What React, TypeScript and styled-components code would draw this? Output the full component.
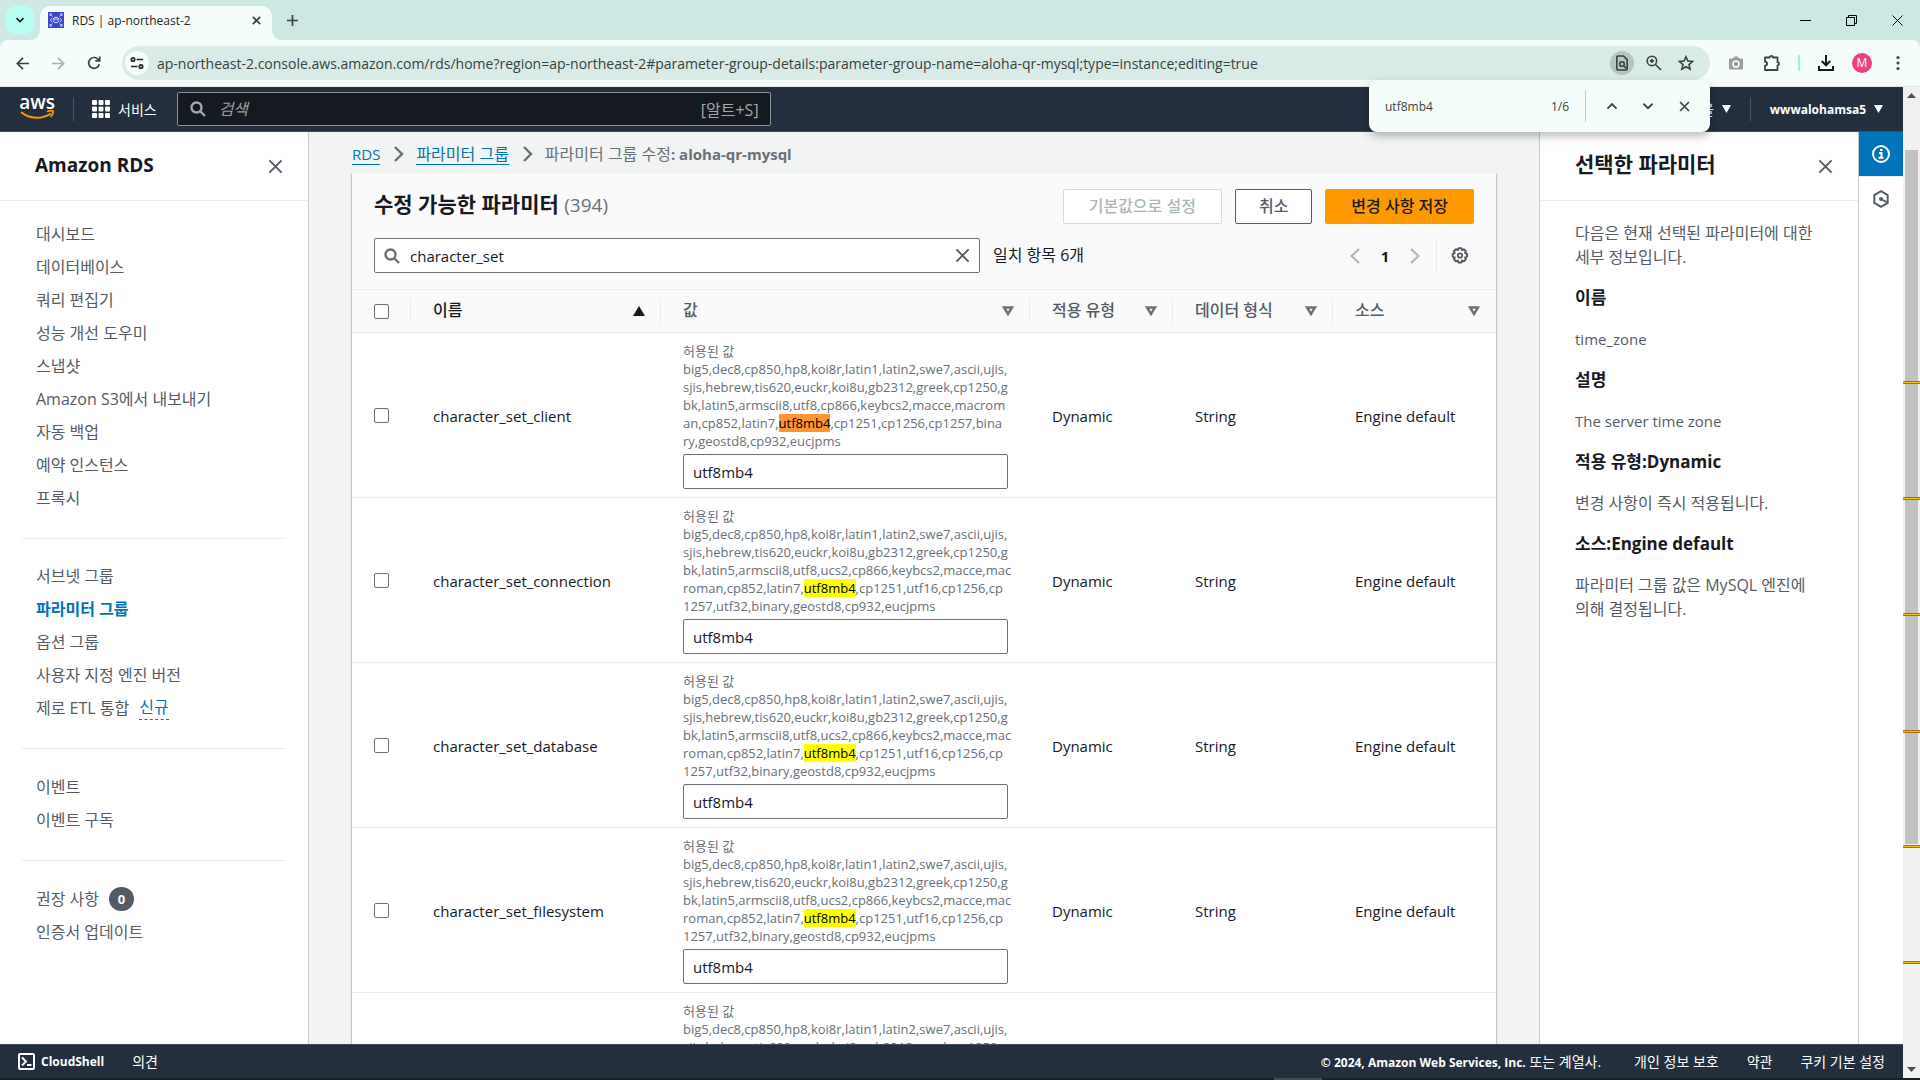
import React from 'react';
import styled, { createGlobalStyle, css } from 'styled-components';

const latin = '"Open Sans", "Noto Sans", "Noto Sans CJK KR", sans-serif';

const color = {
  navy: '#232f3e',
  ink: '#16191f',
  text: '#545b64',
  muted: '#687078',
  blue: '#0073bb',
  line: '#eaeded',
  edge: '#d5dbdb',
  mint: '#cce8e2',
  toolbar: '#f4fdfa',
};

const GlobalStyle = createGlobalStyle`
  *, *::before, *::after { box-sizing: border-box; }
  body { margin: 0; font-family: ${latin}; color: ${color.ink}; }
  button, input { font: inherit; color: inherit; }
  button { border: 0; background: none; padding: 0; cursor: pointer; }
  h1, h2, h3, p, ul, ol { margin: 0; padding: 0; }
  ul, ol { list-style: none; }
  svg { display: block; flex: none; }
`;

const Screen = styled.div`
  height: 100vh;
  display: flex;
  flex-direction: column;
  overflow: hidden;
`;

/* ---------- browser frame ---------- */

const TabStrip = styled.div`
  flex: none;
  height: 40px;
  display: flex;
  background: ${color.mint};
`;

const TabSearch = styled.button`
  width: 28px;
  height: 28px;
  margin: 6px 6px 0 6px;
  border-radius: 10px;
  background: #b4fff0;
  display: grid;
  place-items: center;
`;

const Tab = styled.div`
  position: relative;
  width: 232px;
  height: 34px;
  margin-top: 6px;
  padding: 0 8px;
  display: flex;
  align-items: center;
  gap: 8px;
  border-radius: 10px 10px 0 0;
  background: ${color.toolbar};
  font-size: 12px;
  color: #1f2423;
  padding-bottom: 6px;

  &::before,
  &::after {
    content: '';
    position: absolute;
    bottom: 0;
    width: 10px;
    height: 10px;
  }
  &::before {
    left: -10px;
    background: radial-gradient(circle at 0 0, transparent 10px, ${color.toolbar} 10px);
  }
  &::after {
    right: -10px;
    background: radial-gradient(circle at 100% 0, transparent 10px, ${color.toolbar} 10px);
  }
`;

const TabTitle = styled.span`
  flex: 1;
  white-space: nowrap;
`;

const IconButton = styled.button<{ $size?: number; $color?: string; $bg?: string }>`
  flex: none;
  width: ${(p) => p.$size ?? 24}px;
  height: ${(p) => p.$size ?? 24}px;
  border-radius: 50%;
  color: ${(p) => p.$color ?? '#39423f'};
  background: ${(p) => p.$bg ?? 'transparent'};
  display: grid;
  place-items: center;
`;

const NewTab = styled(IconButton)`
  margin: 8px 0 0 8px;
`;

const WindowControls = styled.div`
  margin-left: auto;
  display: flex;
`;

const WindowButton = styled.button`
  width: 46px;
  height: 40px;
  display: grid;
  place-items: center;
  color: #000;
`;

const ToolbarBack = styled.div`
  flex: none;
  background: ${color.mint};
`;

const Toolbar = styled.div`
  height: 47px;
  padding: 0 10px 0 10px;
  display: flex;
  align-items: center;
  background: ${color.toolbar};
  border-bottom: 1px solid #dfe7e5;
  border-radius: 8px 8px 0 0;
`;

const NavButtons = styled.div`
  display: flex;
  gap: 12px;
  margin-right: 16px;
`;

const AddressBar = styled.label`
  flex: 1;
  height: 34px;
  padding: 0 12px 0 3px;
  display: flex;
  align-items: center;
  gap: 8px;
  border-radius: 17px;
  background: #d9ebe7;
`;

const AddressInput = styled.input`
  flex: 1;
  min-width: 0;
  border: 0;
  padding: 0;
  outline: 0;
  background: none;
  font-size: 14px;
  color: #35413e;
`;

const Extensions = styled.div`
  display: flex;
  align-items: center;
  gap: 12px;
  margin-left: 14px;
`;

const ToolbarRule = styled.span`
  width: 2px;
  height: 16px;
  margin: 0 2px;
  background: #9deee3;
`;

const Avatar = styled.button`
  width: 20px;
  height: 20px;
  margin: 0 2px;
  border-radius: 50%;
  background: #ec407a;
  color: #fff;
  font-size: 12px;
  line-height: 20px;
`;

const FindBar = styled.form`
  position: absolute;
  z-index: 3;
  top: 80px;
  right: 210px;
  width: 341px;
  height: 52px;
  padding: 0 14px 0 16px;
  display: flex;
  align-items: center;
  border-radius: 8px;
  background: ${color.toolbar};
  box-shadow: 0 4px 10px rgba(0, 0, 0, 0.28);
  font-size: 12px;
  color: #3c4442;
`;

const FindInput = styled.input`
  flex: 1;
  min-width: 0;
  padding: 0;
  border: 0;
  outline: 0;
  background: none;
`;

const FindRule = styled.span`
  width: 1px;
  height: 32px;
  margin: 0 14px 0 16px;
  background: #8fe5dc;
`;

const FindButtons = styled.div`
  display: flex;
  gap: 12px;
`;

/* ---------- viewport and scrollbar ---------- */

const Viewport = styled.div`
  flex: 1;
  min-height: 0;
  display: flex;
`;

const Page = styled.div`
  flex: 1;
  min-width: 0;
  display: flex;
  flex-direction: column;
`;

const ScrollTrack = styled.div`
  position: relative;
  flex: none;
  width: 17px;
  display: flex;
  flex-direction: column;
  background: #f1f1f1;
`;

const ScrollArrow = styled.span`
  height: 17px;
  display: grid;
  place-items: center;
  color: #505050;
`;

const ScrollThumb = styled.span`
  height: 70%;
  margin: 46px 2px auto;
  background: #c1c1c1;
`;

const ScrollMark = styled.span`
  position: absolute;
  left: 0;
  right: 0;
  height: 3px;
  background: #f7c200;
  border: solid #a8700c;
  border-width: 1px 0;
`;

const TaskbarEdge = styled.div`
  flex: none;
  height: 2px;
  background: #1b1e22;
  display: flex;
  padding-right: 598px;
  justify-content: flex-end;

  &::after {
    content: '';
    width: 48px;
    background: #484b50;
  }
`;

/* ---------- console header ---------- */

const Header = styled.header`
  flex: none;
  height: 45px;
  padding: 0 20px;
  display: flex;
  align-items: center;
  background: ${color.navy};
  border-bottom: 1px solid #414d5c;
  color: #fff;
`;

const HeaderRule = styled.span<{ $gap: number }>`
  width: 1px;
  height: 24px;
  margin: 0 ${(p) => p.$gap}px;
  background: #4b5563;
`;

const HeaderButton = styled.button<{ $bold?: boolean }>`
  display: flex;
  align-items: center;
  gap: 8px;
  color: #fff;
  font-size: ${(p) => (p.$bold ? 12 : 14)}px;
  font-weight: ${(p) => (p.$bold ? 700 : 400)};
`;

const HeaderSearch = styled.label`
  width: 594px;
  height: 34px;
  margin-left: 20px;
  padding: 0 11px 0 12px;
  display: flex;
  align-items: center;
  gap: 13px;
  border: 1px solid #8a9398;
  border-radius: 2px;
  background: #151a20;
  color: #a0a8ad;
  font-size: 16px;
`;

const HeaderSearchInput = styled.input`
  flex: 1;
  min-width: 0;
  border: 0;
  padding: 0;
  outline: 0;
  background: none;
  &::placeholder {
    color: #95a0a0;
    font-style: italic;
    opacity: 1;
  }
`;

const HeaderRight = styled.div`
  margin-left: auto;
  display: flex;
  align-items: center;
`;

const LogoText = styled.text`
  font: 600 19px ${latin};
  fill: #fff;
`;

/* ---------- console body ---------- */

const Body = styled.div`
  flex: 1;
  min-height: 0;
  display: flex;
`;

const Sidebar = styled.nav`
  flex: none;
  width: 309px;
  border-right: 1px solid #c6cbcc;
  background: #fff;
`;

const PanelHead = styled.div`
  height: 69px;
  padding: 0 24px 0 35px;
  display: flex;
  align-items: center;
  justify-content: space-between;
  border-bottom: 1px solid ${color.line};
`;

const SidebarTitle = styled.h2`
  padding-bottom: 2px;
  font-size: 19px;
  line-height: 24px;
`;

const PanelTitle = styled.h2`
  padding-bottom: 4px;
  font-size: 21px;
  line-height: 24px;
`;

const NavGroup = styled.ul`
  margin: 0 22px;
  padding: 20px 0 24px 14px;
  & + & {
    border-top: 1px solid ${color.line};
  }
  & + & + & {
    padding-top: 21px;
  }
  &:first-of-type {
    padding-top: 16px;
  }
`;

const NavItem = styled.li`
  height: 33px;
  display: flex;
  align-items: center;
  gap: 10px;
`;

const NavLink = styled.a<{ $active?: boolean }>`
  font-size: 16px;
  line-height: 24px;
  text-decoration: none;
  color: ${(p) => (p.$active ? color.blue : color.text)};
  font-weight: ${(p) => (p.$active ? 700 : 400)};
`;

const NewTag = styled.a`
  font-size: 16px;
  line-height: 24px;
  color: ${color.blue};
  text-decoration: none;
  border-bottom: 1px dashed ${color.blue};
`;

const CountBadge = styled.span`
  min-width: 25px;
  height: 24px;
  border-radius: 12px;
  background: ${color.text};
  color: #fff;
  font-size: 13px;
  font-weight: 700;
  line-height: 24px;
  text-align: center;
`;

const Main = styled.main`
  flex: 1;
  min-width: 0;
  padding: 0 43px;
  overflow: hidden;
  background: #f2f3f3;
`;

const Breadcrumbs = styled.ol`
  padding: 10px 0 7px;
  display: flex;
  align-items: center;
  gap: 12px;
  color: ${color.muted};
`;

const Crumb = styled.li`
  display: flex;
  align-items: center;
  gap: 13px;
  font-size: 16px;
  line-height: 24px;
`;

const CrumbName = styled.strong`
  font-size: 15px;
`;

const CrumbLink = styled.a<{ $size: number }>`
  font-size: ${(p) => p.$size}px;
  line-height: 20px;
  font-weight: 400;
  color: ${color.blue};
  text-decoration: none;
  border-bottom: 1px solid ${color.blue};
`;

const Card = styled.section`
  background: #fff;
  box-shadow: 0 1px 1px rgba(0, 28, 36, 0.3), 1px 1px 1px rgba(0, 28, 36, 0.15),
    -1px 1px 1px rgba(0, 28, 36, 0.15);
`;

const CardHead = styled.div`
  padding: 16px 22px;
  display: flex;
  flex-direction: column;
  gap: 14px;
  background: #fafafa;
  border-bottom: 1px solid ${color.line};
`;

const CardRow = styled.div`
  display: flex;
  align-items: center;
  gap: 13px;
`;

const CardTitle = styled.h1`
  flex: 1;
  padding-bottom: 4px;
  font-size: 21px;
  line-height: 28px;
`;

const Counter = styled.span`
  font-size: 19px;
  font-weight: 400;
  color: ${color.muted};
`;

const Button = styled.button<{ $kind?: 'primary' | 'normal' }>`
  height: 35px;
  padding: 0 23px 3px;
  border: 1px solid ${color.text};
  border-radius: 2px;
  background: #fff;
  color: ${color.text};
  font-size: 16px;
  font-weight: 500;
  ${(p) =>
    p.$kind === 'primary' &&
    css`
      padding: 0 25px 3px;
      border-color: #ff9900;
      background: #ff9900;
      color: ${color.ink};
    `}
  &:disabled {
    padding: 0 25px 3px;
    border-color: ${color.edge};
    color: #aab7b8;
  }
`;

const FilterBox = styled.label`
  width: 606px;
  height: 35px;
  padding: 0 9px;
  display: flex;
  align-items: center;
  gap: 10px;
  border: 1px solid ${color.muted};
  border-radius: 2px;
  background: #fff;
`;

const FilterInput = styled.input`
  flex: 1;
  min-width: 0;
  border: 0;
  padding: 0;
  outline: 0;
  background: none;
  font-size: 15px;
`;

const MatchCount = styled.span`
  flex: 1;
  padding-bottom: 3px;
  font-size: 16px;
`;

const Pager = styled.div`
  display: flex;
  align-items: center;
`;

const PageNumber = styled.button`
  width: 36px;
  font-size: 15px;
  font-weight: 700;
`;

const PagerRule = styled.span`
  width: 1px;
  height: 33px;
  margin: 0 9px;
  background: ${color.line};
`;

const Table = styled.table`
  width: 100%;
  table-layout: fixed;
  border-collapse: separate;
  border-spacing: 0;
`;

const Column = styled.col<{ $width?: number }>`
  ${(p) => p.$width && `width: ${p.$width}px;`}
`;

const Th = styled.th<{ $sorted?: boolean }>`
  height: 43px;
  padding: 0;
  background: #fafafa;
  border-bottom: 1px solid ${color.line};
  color: ${(p) => (p.$sorted ? color.ink : color.text)};
  font-size: 16px;
  font-weight: 500;
  text-align: left;
`;

const ThInner = styled.div<{ $last?: boolean }>`
  height: 24px;
  padding: 0 15px 0 22px;
  display: flex;
  align-items: center;
  justify-content: space-between;
  border-right: 1px solid ${(p) => (p.$last ? 'transparent' : color.line)};
`;

const ThLabel = styled.span`
  line-height: 20px;
  padding-bottom: 3px;
`;

const Td = styled.td`
  padding: 9px 22px 8px;
  border-bottom: 1px solid ${color.line};
  font-size: 15px;
  vertical-align: middle;
`;

const Checkbox = styled.input`
  appearance: none;
  display: block;
  width: 15px;
  height: 15px;
  margin: 0;
  border: 1px solid ${color.muted};
  border-radius: 2px;
  background: #fff;
`;

const Allowed = styled.div`
  font-size: 13px;
  line-height: 18px;
  color: ${color.muted};
  white-space: nowrap;
`;

const Hit = styled.mark<{ $current?: boolean }>`
  background: ${(p) => (p.$current ? '#ff9632' : '#ffff00')};
  color: #000;
`;

const ValueInput = styled.input`
  display: block;
  width: 100%;
  height: 35px;
  margin-top: 4px;
  padding: 0 9px;
  border: 1px solid ${color.muted};
  border-radius: 2px;
  background: #fff;
  font-size: 15px;
`;

/* ---------- help panel ---------- */

const HelpPanel = styled.aside`
  flex: none;
  width: 320px;
  border: solid #c6cbcc;
  border-width: 0 1px;
  background: #fff;
`;

const HelpBody = styled.div`
  padding: 20px 34px 0 35px;
  display: flex;
  flex-direction: column;
  gap: 17px;
`;

const HelpText = styled.p<{ $size: number }>`
  font-size: ${(p) => p.$size}px;
  line-height: 24px;
  color: ${color.text};
`;

const HelpHeading = styled.h3`
  font-size: 17px;
  line-height: 24px;
`;

const ToolStrip = styled.div`
  flex: none;
  width: 44px;
  background: #fff;
`;

const ToolButton = styled.button<{ $active?: boolean }>`
  width: 44px;
  height: 45px;
  display: grid;
  place-items: center;
  border-bottom: 1px solid ${(p) => (p.$active ? color.line : '#fff')};
  background: ${(p) => (p.$active ? color.blue : '#fff')};
  color: ${(p) => (p.$active ? '#fff' : color.text)};
`;

/* ---------- footer ---------- */

const Footer = styled.footer`
  flex: none;
  height: 34px;
  padding: 0 18px 1px;
  display: flex;
  align-items: center;
  gap: 28px;
  background: ${color.navy};
  border-top: 1px solid #414d5c;
  color: #fff;
`;

const FooterLink = styled.a`
  display: flex;
  align-items: center;
  gap: 6px;
  color: #fff;
  text-decoration: none;
  font-size: 14px;
`;

const ShellLabel = styled.span`
  font-size: 12px;
  font-weight: 700;
`;

const Copyright = styled.span`
  margin-left: auto;
  margin-right: 5px;
  font-size: 14px;
`;

const Company = styled.span`
  font-size: 12px;
  font-weight: 700;
`;

/* ---------- icons ---------- */

type StrokeProps = { d: string; size?: number; box?: number; width?: number; children?: React.ReactNode };

const Stroke = ({ d, size = 16, box = 16, width = 2, children }: StrokeProps) => (
  <svg width={size} height={size} viewBox={`0 0 ${box} ${box}`} fill="none" stroke="currentColor" strokeWidth={width} aria-hidden="true">
    <path d={d} />
    {children}
  </svg>
);

const CloseIcon = ({ size = 15, width = 2 }: { size?: number; width?: number }) => (
  <Stroke size={size} width={width} d="M1.5 1.5l13 13M14.5 1.5l-13 13" />
);

const SearchIcon = ({ width = 2.4 }: { width?: number }) => (
  <Stroke width={width} d="M10.4 10.4L15 15">
    <circle cx="6.5" cy="6.5" r="5" />
  </Stroke>
);

const CrumbChevron = () => (
  <svg width="11" height="16" viewBox="0 0 11 16" fill="none" stroke={color.muted} strokeWidth="2.4" aria-hidden="true">
    <path d="M2 1l7 7-7 7" />
  </svg>
);

const Caret = () => (
  <svg width="9" height="8" viewBox="0 0 9 8" fill="#fff" aria-hidden="true">
    <path d="M0 0h9L4.500 8z" />
  </svg>
);

const SortUp = () => (
  <svg width="12" height="10" viewBox="0 0 12 10" fill={color.ink} aria-hidden="true">
    <path d="M6 0l6 10H0z" />
  </svg>
);

const SortIdle = () => (
  <svg width="12" height="10" viewBox="0 0 12 10" fill="none" stroke={color.muted} strokeWidth="2.4" aria-hidden="true">
    <path d="M2 1.500h8L6 8z" />
  </svg>
);

const AwsLogo = () => (
  <svg width="35" height="38" viewBox="0 -6 35 38" aria-label="aws" role="img">
    <LogoText x="17" y="13" textAnchor="middle">aws</LogoText>
    <path d="M1 16c9 7.500 21 7.500 30 1.500" fill="none" stroke="#ff9900" strokeWidth="2" />
    <path d="M27 15.500c3-1 5.500-1 6-.3s-.4 3.600-2.300 5.800" fill="none" stroke="#ff9900" strokeWidth="1.800" />
  </svg>
);

const GridIcon = () => (
  <svg width="18" height="18" viewBox="0 0 18 18" fill="#fff" aria-hidden="true">
    {[0, 1, 2].flatMap((r) => [0, 1, 2].map((c) => <rect key={`${r}${c}`} x={c * 6.500} y={r * 6.500} width="5" height="5" rx="1" />))}
  </svg>
);

const RdsIcon = () => (
  <svg width="16" height="16" viewBox="0 0 16 16" fill="none" stroke="#fff" aria-hidden="true">
    <rect width="16" height="16" fill="#3b48cc" stroke="none" />
    <path d="M2 4V2h2M12 2h2v2M14 12v2h-2M4 14H2v-2M2.500 2.500l2 2M13.500 2.500l-2 2M2.500 13.500l2-2M13.500 13.500l-2-2" strokeWidth=".8" />
    <path d="M4 6L2.500 8 4 10M12 6l1.500 2L12 10" strokeWidth=".8" />
    <ellipse cx="8" cy="6.300" rx="2.200" ry=".9" strokeWidth=".8" />
    <path d="M5.800 6.300v3.500c0 1.200 4.400 1.200 4.400 0V6.300" strokeWidth=".8" />
  </svg>
);

const GearIcon = () => (
  <svg width="18" height="18" viewBox="0 0 18 18" fill="none" stroke={color.text} aria-hidden="true">
    <path
      d="M7.500 1.300h3l.6 1.700 1.700-.7 2 2-.7 1.700 1.900.8v2.900l-1.900.7.8 1.900-2.100 2.100-1.800-.8-.6 1.900h-3l-.6-1.900-1.900.8-2-2.100.8-1.800-1.900-.7V6.900l1.800-.7-.7-1.900L5 2.200l1.800.8z"
      strokeWidth="2"
      strokeLinejoin="round"
    />
    <circle cx="9" cy="8.500" r="2.200" strokeWidth="1.800" />
  </svg>
);

const InfoIcon = () => (
  <svg width="18" height="18" viewBox="0 0 18 18" fill="none" stroke="currentColor" strokeWidth="2" aria-hidden="true">
    <circle cx="9" cy="9" r="8" />
    <path d="M7 8h2.500v4.500M6.500 12.800h5M8 5h2.500" />
  </svg>
);

const HexIcon = () => (
  <svg width="18" height="18" viewBox="0 0 18 18" fill="none" stroke="currentColor" strokeWidth="2" aria-hidden="true">
    <path d="M9 1.200l6.700 3.900v7.800L9 16.800l-6.700-3.900V5.100z" />
    <circle cx="9" cy="9" r="2" fill="currentColor" stroke="none" />
    <path d="M9 9l5.500 3.200" />
  </svg>
);

const ShellIcon = () => (
  <svg width="17" height="17" viewBox="0 0 17 17" fill="none" stroke="#fff" strokeWidth="2" aria-hidden="true">
    <rect x="1" y="1" width="15" height="15" rx="1" />
    <path d="M4 4.500l4 4-4 4M9 12h4.500" />
  </svg>
);

const TuneIcon = () => (
  <svg width="14" height="14" viewBox="0 0 14 14" fill="none" stroke="#1f2826" strokeWidth="1.700" aria-hidden="true">
    <circle cx="3" cy="3.500" r="1.700" />
    <path d="M6.500 3.500H13M1 10.500h6.500" />
    <circle cx="11" cy="10.500" r="1.700" />
  </svg>
);

const PageSearchIcon = () => (
  <Stroke width={1.6} d="M9.500 1H4Q2.800 1 2.800 2.200v11.600Q2.800 15 4 15h8q1.200 0 1.200-1.200V4.700z">
    <circle cx="8" cy="9" r="2.300" />
    <path d="M9.700 10.700l3 3" />
  </Stroke>
);

const ZoomIcon = () => (
  <Stroke width={1.600} d="M9.500 9.500L15 15M5.900 3.800v4.200M3.800 5.900h4.200">
    <circle cx="5.900" cy="5.900" r="4.700" />
  </Stroke>
);

const StarIcon = () => (
  <Stroke width={1.600} d="M8 1.800l1.900 4.300 4.700.4-3.600 3.100 1.100 4.600L8 11.800l-4.100 2.400L5 9.600 1.400 6.500l4.700-.4z" />
);

const CameraIcon = () => (
  <svg width="16" height="16" viewBox="0 0 16 16" aria-hidden="true">
    <path d="M2 3.500h3L6.500 1.500h3L11 3.500h3q1 0 1 1v9q0 1-1 1H2q-1 0-1-1v-9q0-1 1-1z" fill="#9a9d9c" />
    <circle cx="8" cy="9" r="3" fill="none" stroke="#fff" strokeWidth="1.600" />
  </svg>
);

const PuzzleIcon = () => (
  <svg width="18" height="18" viewBox="0 0 18 18" fill="none" stroke="#3c4745" strokeWidth="1.800" strokeLinejoin="round" aria-hidden="true">
    <path d="M2 3.500h4.800a1.600 1.600 0 0 1 3.200 0h4.500v4.700a1.600 1.600 0 0 1 0 3.200V16H2v-4.300c2.800-.3 2.800-3.700 0-4z" />
  </svg>
);

const DownloadIcon = () => (
  <svg width="18" height="18" viewBox="0 0 18 18" fill="none" stroke="#15191a" strokeWidth="2" aria-hidden="true">
    <path d="M9 1v10M4.700 7L9 11.300 13.300 7M2 12v4h14v-4" />
  </svg>
);

const DotsIcon = () => (
  <svg width="4" height="16" viewBox="0 0 4 16" fill="#3c4745" aria-hidden="true">
    <circle cx="2" cy="2.500" r="1.600" />
    <circle cx="2" cy="8" r="1.600" />
    <circle cx="2" cy="13.500" r="1.600" />
  </svg>
);

const RestoreIcon = () => (
  <svg width="11" height="11" viewBox="0 0 11 11" fill="none" stroke="#000" aria-hidden="true">
    <path d="M.5 2.500h8v8h-8zM2.500 2.500v-2h8v8h-2" />
  </svg>
);

const ReloadIcon = () => (
  <Stroke width={1.700} d="M13.300 9.200A5.400 5.400 0 1 1 12 4.200L13.500 5.700M13.700 1.500v4.400H9.300" />
);

/* ---------- data ---------- */

type NavEntry = { label: string; active?: boolean; tag?: string; count?: number };

const navGroups: NavEntry[][] = [
  [
    { label: '대시보드' },
    { label: '데이터베이스' },
    { label: '쿼리 편집기' },
    { label: '성능 개선 도우미' },
    { label: '스냅샷' },
    { label: 'Amazon S3에서 내보내기' },
    { label: '자동 백업' },
    { label: '예약 인스턴스' },
    { label: '프록시' },
  ],
  [
    { label: '서브넷 그룹' },
    { label: '파라미터 그룹', active: true },
    { label: '옵션 그룹' },
    { label: '사용자 지정 엔진 버전' },
    { label: '제로 ETL 통합', tag: '신규' },
  ],
  [{ label: '이벤트' }, { label: '이벤트 구독' }],
  [{ label: '권장 사항', count: 0 }, { label: '인증서 업데이트' }],
];

const clientSets = [
  'big5,dec8,cp850,hp8,koi8r,latin1,latin2,swe7,ascii,ujis,',
  'sjis,hebrew,tis620,euckr,koi8u,gb2312,greek,cp1250,g',
  'bk,latin5,armscii8,utf8,cp866,keybcs2,macce,macrom',
  'an,cp852,latin7,utf8mb4,cp1251,cp1256,cp1257,bina',
  'ry,geostd8,cp932,eucjpms',
];

const serverSets = [
  'big5,dec8,cp850,hp8,koi8r,latin1,latin2,swe7,ascii,ujis,',
  'sjis,hebrew,tis620,euckr,koi8u,gb2312,greek,cp1250,g',
  'bk,latin5,armscii8,utf8,ucs2,cp866,keybcs2,macce,mac',
  'roman,cp852,latin7,utf8mb4,cp1251,utf16,cp1256,cp',
  '1257,utf32,binary,geostd8,cp932,eucjpms',
];

const parameters = [
  { name: 'character_set_client', allowed: clientSets },
  { name: 'character_set_connection', allowed: serverSets },
  { name: 'character_set_database', allowed: serverSets },
  { name: 'character_set_filesystem', allowed: serverSets },
  { name: 'character_set_results', allowed: clientSets },
];

const columns = ['값', '적용 유형', '데이터 형식', '소스'];
const matchPositions = [294, 410, 526, 643, 758, 874];
const trackLength = 991;

const query = 'utf8mb4';

const AllowedLine = ({ text, current }: { text: string; current: boolean }) => {
  const at = text.indexOf(query);
  if (at < 0) return <div>{text}</div>;
  return (
    <div>
      {text.slice(0, at)}
      <Hit $current={current}>{query}</Hit>
      {text.slice(at + query.length)}
    </div>
  );
};

/* ---------- sections ---------- */

const BrowserFrame = () => (
  <>
    <TabStrip>
      <TabSearch aria-label="탭 검색">
        <Stroke size={10} width={2.500} d="M2.500 5L8 10.500 13.500 5" />
      </TabSearch>
      <Tab>
        <RdsIcon />
        <TabTitle>RDS | ap-northeast-2</TabTitle>
        <IconButton $size={16} aria-label="탭 닫기">
          <CloseIcon size={9} width={3} />
        </IconButton>
      </Tab>
      <NewTab aria-label="새 탭">
        <Stroke size={11} width={2.500} d="M8 0v16M0 8h16" />
      </NewTab>
      <WindowControls>
        <WindowButton aria-label="최소화">
          <Stroke size={11} box={11} width={1} d="M0 5.500h11" />
        </WindowButton>
        <WindowButton aria-label="이전 크기로">
          <RestoreIcon />
        </WindowButton>
        <WindowButton aria-label="닫기">
          <Stroke size={11} box={11} width={1} d="M.5 .5l10 10M10.500 .5l-10 10" />
        </WindowButton>
      </WindowControls>
    </TabStrip>
    <ToolbarBack>
      <Toolbar>
        <NavButtons>
          <IconButton aria-label="뒤로">
            <Stroke width={1.800} d="M15 8H2.500M8.500 2L2.500 8l6 6" size={15} />
          </IconButton>
          <IconButton aria-label="앞으로" $color="#a5b0ad">
            <Stroke width={1.800} d="M1 8h12.500M7.500 2l6 6-6 6" size={15} />
          </IconButton>
          <IconButton aria-label="새로고침">
            <ReloadIcon />
          </IconButton>
        </NavButtons>
        <AddressBar>
          <IconButton $bg={color.toolbar} aria-label="사이트 정보">
            <TuneIcon />
          </IconButton>
          <AddressInput
            aria-label="주소"
            defaultValue="ap-northeast-2.console.aws.amazon.com/rds/home?region=ap-northeast-2#parameter-group-details:parameter-group-name=aloha-qr-mysql;type=instance;editing=true"
          />
          <IconButton $bg="#b4c6c2" aria-label="페이지에서 찾기">
            <PageSearchIcon />
          </IconButton>
          <IconButton aria-label="확대">
            <ZoomIcon />
          </IconButton>
          <IconButton aria-label="북마크">
            <StarIcon />
          </IconButton>
        </AddressBar>
        <Extensions>
          <IconButton aria-label="캡처">
            <CameraIcon />
          </IconButton>
          <IconButton aria-label="확장 프로그램">
            <PuzzleIcon />
          </IconButton>
          <ToolbarRule />
          <IconButton aria-label="다운로드">
            <DownloadIcon />
          </IconButton>
          <Avatar aria-label="프로필">M</Avatar>
          <IconButton aria-label="메뉴">
            <DotsIcon />
          </IconButton>
        </Extensions>
      </Toolbar>
    </ToolbarBack>
    <FindBar>
      <FindInput aria-label="찾기" defaultValue={query} />
      <span>1/6</span>
      <FindRule />
      <FindButtons>
        <IconButton type="button" aria-label="이전">
          <Stroke size={12} width={2.400} d="M2 11.500l6-6 6 6" />
        </IconButton>
        <IconButton type="button" aria-label="다음">
          <Stroke size={12} width={2.400} d="M2 5l6 6 6-6" />
        </IconButton>
        <IconButton type="button" aria-label="찾기 닫기">
          <CloseIcon size={11} width={2.400} />
        </IconButton>
      </FindButtons>
    </FindBar>
  </>
);

const ConsoleHeader = () => (
  <Header>
    <AwsLogo />
    <HeaderRule $gap={18} />
    <HeaderButton>
      <GridIcon />
      서비스
    </HeaderButton>
    <HeaderSearch>
      <SearchIcon />
      <HeaderSearchInput placeholder="검색" aria-label="검색" />
      [알트+S]
    </HeaderSearch>
    <HeaderRight>
      <HeaderButton>
        서울 <Caret />
      </HeaderButton>
      <HeaderRule $gap={19} />
      <HeaderButton $bold>
        wwwalohamsa5 <Caret />
      </HeaderButton>
    </HeaderRight>
  </Header>
);

const SideNavigation = () => (
  <Sidebar>
    <PanelHead>
      <SidebarTitle>Amazon RDS</SidebarTitle>
      <IconButton $size={18} $color={color.text} aria-label="탐색 닫기">
        <CloseIcon />
      </IconButton>
    </PanelHead>
    {navGroups.map((group, i) => (
      <NavGroup key={i}>
        {group.map((item) => (
          <NavItem key={item.label}>
            <NavLink href="#" $active={item.active}>
              {item.label}
            </NavLink>
            {item.tag && <NewTag href="#">{item.tag}</NewTag>}
            {item.count !== undefined && <CountBadge>{item.count}</CountBadge>}
          </NavItem>
        ))}
      </NavGroup>
    ))}
  </Sidebar>
);

const ParameterTable = () => (
  <Table>
    <colgroup>
      <Column $width={59} />
      <Column />
      <Column $width={369} />
      <Column $width={143} />
      <Column $width={160} />
      <Column $width={163} />
    </colgroup>
    <thead>
      <tr>
        <Th>
          <ThInner>
            <Checkbox type="checkbox" aria-label="모두 선택" />
          </ThInner>
        </Th>
        <Th $sorted>
          <ThInner>
            <ThLabel>이름</ThLabel>
            <SortUp />
          </ThInner>
        </Th>
        {columns.map((label, i) => (
          <Th key={label}>
            <ThInner $last={i === columns.length - 1}>
              <ThLabel>{label}</ThLabel>
              <SortIdle />
            </ThInner>
          </Th>
        ))}
      </tr>
    </thead>
    <tbody>
      {parameters.map((param, row) => (
        <tr key={param.name}>
          <Td>
            <Checkbox type="checkbox" aria-label={param.name} />
          </Td>
          <Td>{param.name}</Td>
          <Td>
            <Allowed>
              <div>허용된 값</div>
              {param.allowed.map((line) => (
                <AllowedLine key={line} text={line} current={row === 0} />
              ))}
            </Allowed>
            <ValueInput defaultValue="utf8mb4" aria-label={`${param.name} 값`} />
          </Td>
          <Td>Dynamic</Td>
          <Td>String</Td>
          <Td>Engine default</Td>
        </tr>
      ))}
    </tbody>
  </Table>
);

const ParameterPage = () => (
  <Main>
    <Breadcrumbs>
      <Crumb>
        <CrumbLink href="#" $size={15}>RDS</CrumbLink>
        <CrumbChevron />
      </Crumb>
      <Crumb>
        <CrumbLink href="#" $size={16}>파라미터 그룹</CrumbLink>
        <CrumbChevron />
      </Crumb>
      <Crumb>
        <span>
          파라미터 그룹 수정<CrumbName>: aloha-qr-mysql</CrumbName>
        </span>
      </Crumb>
    </Breadcrumbs>
    <Card>
      <CardHead>
        <CardRow>
          <CardTitle>
            수정 가능한 파라미터 <Counter>(394)</Counter>
          </CardTitle>
          <Button disabled>기본값으로 설정</Button>
          <Button>취소</Button>
          <Button $kind="primary">변경 사항 저장</Button>
        </CardRow>
        <CardRow>
          <FilterBox>
            <IconButton as="span" $size={16} $color={color.muted}>
              <SearchIcon />
            </IconButton>
            <FilterInput defaultValue="character_set" aria-label="파라미터 필터링" />
            <IconButton $size={16} $color={color.text} aria-label="지우기">
              <CloseIcon />
            </IconButton>
          </FilterBox>
          <MatchCount>일치 항목 6개</MatchCount>
          <Pager>
            <IconButton $color="#aab7b8" aria-label="이전 페이지">
              <Stroke d="M12 1L4.500 8l7.500 7" />
            </IconButton>
            <PageNumber>1</PageNumber>
            <IconButton $color="#aab7b8" aria-label="다음 페이지">
              <Stroke d="M4 1l7.500 7L4 15" />
            </IconButton>
            <PagerRule />
            <IconButton $size={28} aria-label="기본 설정">
              <GearIcon />
            </IconButton>
          </Pager>
        </CardRow>
      </CardHead>
      <ParameterTable />
    </Card>
  </Main>
);

const Help = () => (
  <HelpPanel>
    <PanelHead>
      <PanelTitle>선택한 파라미터</PanelTitle>
      <IconButton $size={18} $color={color.text} aria-label="도움말 닫기">
        <CloseIcon />
      </IconButton>
    </PanelHead>
    <HelpBody>
      <HelpText $size={16}>다음은 현재 선택된 파라미터에 대한 세부 정보입니다.</HelpText>
      <HelpHeading>이름</HelpHeading>
      <HelpText $size={15}>time_zone</HelpText>
      <HelpHeading>설명</HelpHeading>
      <HelpText $size={15}>The server time zone</HelpText>
      <HelpHeading>적용 유형:Dynamic</HelpHeading>
      <HelpText $size={16}>변경 사항이 즉시 적용됩니다.</HelpText>
      <HelpHeading>소스:Engine default</HelpHeading>
      <HelpText $size={16}>파라미터 그룹 값은 MySQL 엔진에 의해 결정됩니다.</HelpText>
    </HelpBody>
  </HelpPanel>
);

const ConsoleFooter = () => (
  <Footer>
    <FooterLink href="#">
      <ShellIcon />
      <ShellLabel>CloudShell</ShellLabel>
    </FooterLink>
    <FooterLink href="#">의견</FooterLink>
    <Copyright>
      <Company>© 2024, Amazon Web Services, Inc.</Company> 또는 계열사.
    </Copyright>
    <FooterLink href="#">개인 정보 보호</FooterLink>
    <FooterLink href="#">약관</FooterLink>
    <FooterLink href="#">쿠키 기본 설정</FooterLink>
  </Footer>
);

const Scrollbar = () => (
  <ScrollTrack>
    <ScrollArrow>
      <svg width="9" height="5" viewBox="0 0 9 5" fill="currentColor" aria-hidden="true">
        <path d="M0 5l4.500-5L9 5z" />
      </svg>
    </ScrollArrow>
    <ScrollThumb />
    <ScrollArrow>
      <svg width="9" height="5" viewBox="0 0 9 5" fill="currentColor" aria-hidden="true">
        <path d="M0 0l4.500 5L9 0z" />
      </svg>
    </ScrollArrow>
    {matchPositions.map((y) => (
      <ScrollMark key={y} style={{ top: `${(y / trackLength) * 100}%` }} />
    ))}
  </ScrollTrack>
);

export default function App() {
  return (
    <Screen>
      <GlobalStyle />
      <BrowserFrame />
      <Viewport>
        <Page>
          <ConsoleHeader />
          <Body>
            <SideNavigation />
            <ParameterPage />
            <Help />
            <ToolStrip>
              <ToolButton $active aria-label="정보">
                <InfoIcon />
              </ToolButton>
              <ToolButton aria-label="리소스">
                <HexIcon />
              </ToolButton>
            </ToolStrip>
          </Body>
          <ConsoleFooter />
        </Page>
        <Scrollbar />
      </Viewport>
      <TaskbarEdge />
    </Screen>
  );
}
